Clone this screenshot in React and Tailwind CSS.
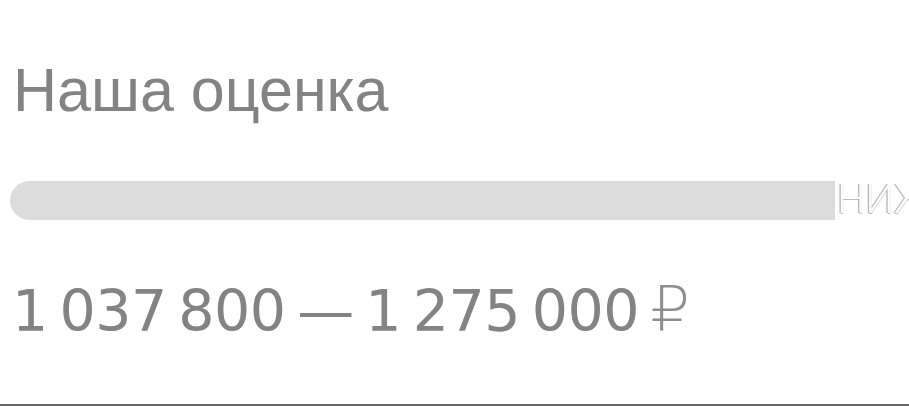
export default function App() {
  return (
    <div className="relative h-[406px] w-[909px] overflow-hidden bg-white">
      <div className="flex flex-col pt-[52px]">
        <h2 className="pl-[13px] font-['Liberation_Sans',Arial,sans-serif] text-[61px] leading-[76px] text-[#838383]">
          Наша оценка
        </h2>

        {/* rating scale */}
        <div className="mt-[52px] flex h-[40px] items-center">
          <div className="ml-[10px] h-[39px] w-[825px] shrink-0 rounded-l-full bg-[#dcdcdc]" />
          <span className="whitespace-nowrap pl-[2px] font-['Roboto',sans-serif] text-[40px] font-light leading-none text-white [text-shadow:-1px_0_0_#9a9a9a,0_1px_0_#bdbdbd]">
            НИЖЕ РЫНКА
          </span>
        </div>

        <div className="mt-[56px] pl-[12px] font-['DejaVu_Sans',sans-serif] text-[57px] leading-[70px] tracking-[-0.5px] text-[#838383] [word-spacing:-6px]">
          1 037 800 — 1 275 000 <span className="text-[62px] font-light leading-none text-[#8e8e8e]">₽</span>
        </div>
      </div>
      <div className="absolute bottom-0 left-0 h-[2px] w-full bg-[#666]" />
    </div>
  );
}
